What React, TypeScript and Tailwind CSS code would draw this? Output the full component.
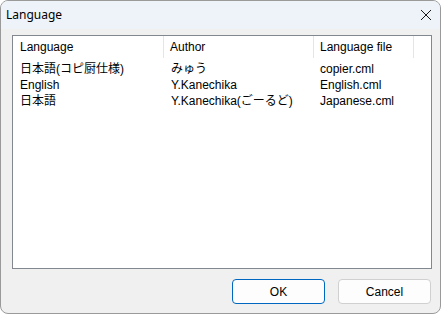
import React from 'react';

const rows = [
  { lang: '日本語(コピ厨仕様)', author: 'みゅう', file: 'copier.cml' },
  { lang: 'English', author: 'Y.Kanechika', file: 'English.cml' },
  { lang: '日本語', author: 'Y.Kanechika(ごーるど)', file: 'Japanese.cml' },
];

const listFont = { fontFamily: '"Liberation Sans", "Noto Sans CJK JP", sans-serif' };

const App: React.FC = () => {
  return (
    <div className="w-[441px] h-[314px] bg-[#f0f0f0] border border-[#9a9a9a] rounded-lg overflow-hidden flex flex-col text-black">
      {/* title bar */}
      <div className="h-[28px] bg-[#eef3f9] flex items-center justify-between pl-[5px] pr-[8px] shrink-0">
        <span className="text-[12px]" style={{ fontFamily: '"Noto Sans", sans-serif' }}>Language</span>
        <svg width="12" height="12" viewBox="0 0 12 12">
          <path d="M1 1 L11 11 M11 1 L1 11" stroke="#1a1a1a" strokeWidth="1" fill="none" />
        </svg>
      </div>

      <div className="flex-1 flex flex-col pl-[11px] pr-[8px] pt-[6px] pb-[9px]" style={listFont}>
        {/* list view */}
        <div className="h-[234px] bg-white border border-[#828790] flex flex-col">
          <div className="flex h-[22px] text-[12px]">
            <div className="w-[151px] flex items-center pl-[7px] border-r border-[#e5e5e5]">Language</div>
            <div className="w-[150px] flex items-center pl-[6px] border-r border-[#e5e5e5]">Author</div>
            <div className="w-[100px] flex items-center pl-[6px] border-r border-[#e5e5e5]">Language file</div>
          </div>
          <div className="pt-[3px] flex flex-col">
            {rows.map((r) => (
              <div key={r.file} className="flex h-[16px] items-center text-[12px] leading-none">
                <div className="w-[151px] pl-[7px] whitespace-nowrap">{r.lang}</div>
                <div className="w-[150px] pl-[7px] whitespace-nowrap">{r.author}</div>
                <div className="w-[100px] pl-[6px] whitespace-nowrap">{r.file}</div>
              </div>
            ))}
          </div>
        </div>

        {/* buttons */}
        <div className="flex justify-end gap-[13px] mt-[10px] pr-[1px]">
          <button className="w-[93px] h-[25px] rounded-[4px] border border-[#0067c0] bg-[#fdfdfd] text-[12px]">
            OK
          </button>
          <button className="w-[93px] h-[25px] rounded-[4px] border border-[#d0d0d0] bg-[#fdfdfd] text-[12px]">
            Cancel
          </button>
        </div>
      </div>
    </div>
  );
};

export default App;
